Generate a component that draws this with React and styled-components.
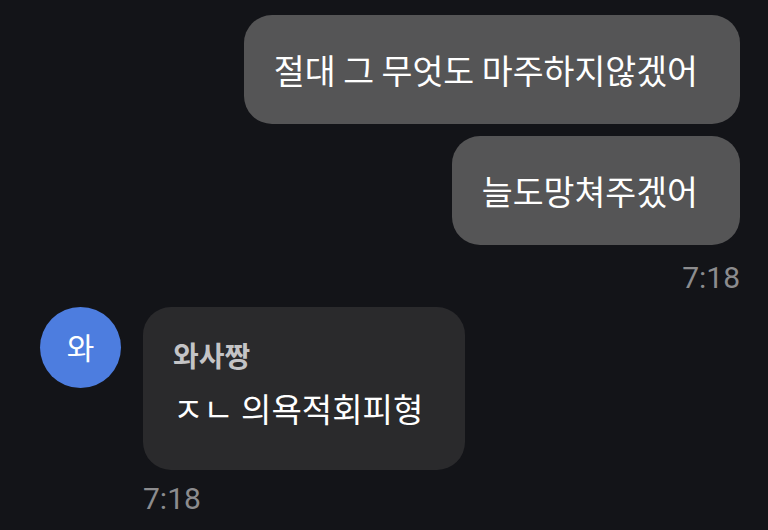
import styled, { createGlobalStyle } from 'styled-components'

const GlobalStyle = createGlobalStyle`
  html, body {
    margin: 0;
    padding: 0;
    background: #131418;
  }
  body {
    font-family: "Noto Sans CJK KR", "Noto Sans", sans-serif;
  }
`

const Screen = styled.div`
  width: 768px;
  height: 530px;
  box-sizing: border-box;
  padding: 15px 28px 0 40px;
  display: flex;
  flex-direction: column;
  overflow: hidden;
`

const MyGroup = styled.div`
  display: flex;
  flex-direction: column;
  align-items: flex-end;
  gap: 12px;
`

const MyBubble = styled.div`
  background: #555556;
  color: #ffffff;
  border-radius: 28px;
  padding: 0 42px 0 30px;
  height: 109px;
  display: flex;
  align-items: center;
  font-size: 33.6px;
`

const Time = styled.div`
  color: #8c8c8e;
  font-family: "Roboto", "Noto Sans", sans-serif;
  font-size: 30px;
  line-height: 1;
  margin-top: ${(p) => p.$top || 0}px;
  align-self: ${(p) => (p.$right ? 'flex-end' : 'flex-start')};
`

const OtherRow = styled.div`
  display: flex;
  align-items: flex-start;
  gap: 22px;
  margin-top: 14px;
`

const Avatar = styled.div`
  width: 81px;
  height: 81px;
  border-radius: 50%;
  background: #4d7ddf;
  color: #ffffff;
  display: flex;
  align-items: center;
  justify-content: center;
  font-size: 30px;
  flex-shrink: 0;
  padding-bottom: 4px;
  box-sizing: border-box;
`

const OtherBubble = styled.div`
  background: #2a2a2c;
  border-radius: 28px;
  padding: 32px 42px 42px 30px;
  display: flex;
  flex-direction: column;
  gap: 16px;
`

const Name = styled.div`
  color: #c4c4c6;
  font-size: 28px;
  font-weight: 700;
  line-height: 1.2;
`

const Message = styled.div`
  color: #ffffff;
  font-size: 33px;
  line-height: 1.2;
`

export default function App() {
  return (
    <>
      <GlobalStyle />
      <Screen>
        <MyGroup>
          <MyBubble>절대 그 무엇도 마주하지않겠어</MyBubble>
          <MyBubble>늘도망쳐주겠어</MyBubble>
          <Time $right $top={6}>7:18</Time>
        </MyGroup>
        <OtherRow>
          <Avatar>와</Avatar>
          <div>
            <OtherBubble>
              <Name>와사짱</Name>
              <Message>ㅈㄴ 의욕적회피형</Message>
            </OtherBubble>
            <Time $top={14}>7:18</Time>
          </div>
        </OtherRow>
      </Screen>
    </>
  )
}
